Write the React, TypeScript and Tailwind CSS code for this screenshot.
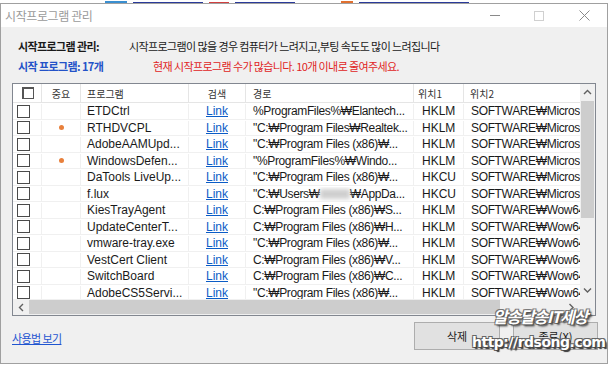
import React from "react";

type Row = {
  name: string;
  dot?: boolean;
  path: React.ReactNode;
  hive: string;
  key2: string;
};

const rows: Row[] = [
  { name: "ETDCtrl", path: "%ProgramFiles%₩Elantech...", hive: "HKLM", key2: "SOFTWARE₩Microsoft" },
  { name: "RTHDVCPL", dot: true, path: "\"C:₩Program Files₩Realtek...", hive: "HKLM", key2: "SOFTWARE₩Microsoft" },
  { name: "AdobeAAMUpd...", path: "\"C:₩Program Files (x86)₩...", hive: "HKLM", key2: "SOFTWARE₩Microsoft" },
  { name: "WindowsDefen...", dot: true, path: "\"%ProgramFiles%₩Windo...", hive: "HKLM", key2: "SOFTWARE₩Microsoft" },
  { name: "DaTools LiveUp...", path: "\"C:₩Program Files (x86)₩...", hive: "HKCU", key2: "SOFTWARE₩Microsoft" },
  {
    name: "f.lux",
    path: (
      <>
        "C:₩Users₩
        <span className="inline-block h-[10px] w-[30px] bg-[#cfcfcf] align-middle blur-[2px]" />
        ₩AppDa...
      </>
    ),
    hive: "HKCU",
    key2: "SOFTWARE₩Microsoft",
  },
  { name: "KiesTrayAgent", path: "C:₩Program Files (x86)₩S...", hive: "HKLM", key2: "SOFTWARE₩Wow6432Node" },
  { name: "UpdateCenterT...", path: "C:₩Program Files (x86)₩H...", hive: "HKLM", key2: "SOFTWARE₩Wow6432Node" },
  { name: "vmware-tray.exe", path: "\"C:₩Program Files (x86)₩...", hive: "HKLM", key2: "SOFTWARE₩Wow6432Node" },
  { name: "VestCert Client", path: "C:₩Program Files (x86)₩V...", hive: "HKLM", key2: "SOFTWARE₩Wow6432Node" },
  { name: "SwitchBoard", path: "C:₩Program Files (x86)₩C...", hive: "HKLM", key2: "SOFTWARE₩Wow6432Node" },
  { name: "AdobeCS5Servi...", path: "\"C:₩Program Files (x86)₩...", hive: "HKLM", key2: "SOFTWARE₩Wow6432Node" },
];

const ko = "font-['Noto_Sans_CJK_KR',sans-serif]";

function Chevron({ dir }: { dir: "up" | "down" | "left" | "right" }) {
  const d = {
    up: "M1 5 L4.5 1.5 L8 5",
    down: "M1 1.5 L4.5 5 L8 1.5",
    left: "M5 1 L1.5 4.5 L5 8",
    right: "M1.5 1 L5 4.5 L1.5 8",
  }[dir];
  const vert = dir === "up" || dir === "down";
  return (
    <svg width={vert ? 9 : 7} height={vert ? 7 : 9} viewBox={vert ? "0 0 9 7" : "0 0 7 9"}>
      <path d={d} fill="none" stroke="#606060" strokeWidth="1.4" />
    </svg>
  );
}

function Box() {
  return <div className="h-[13px] w-[13px] border border-[#4a4a4a] bg-white" />;
}

export default function App() {
  return (
    <div className="relative h-[366px] w-[610px] overflow-hidden bg-white font-['Liberation_Sans','Noto_Sans_CJK_KR',sans-serif]">
      {/* window behind */}
      <div className="flex h-[3px] items-end gap-[6px] pl-[105px]">
        <div className="h-[2px] w-[22px] bg-[#3a8fd0]" />
        <div className="h-[1px] w-[70px] bg-[#2a3a9a]" />
        <div className="h-[1px] w-[20px] bg-[#d04040]" />
        <div className="h-[1px] w-[60px] bg-[#2a3a9a]" />
        <div className="ml-[40px] h-[2px] w-[12px] bg-[#e07030]" />
        <div className="h-[1px] w-[110px] bg-[#2a3a9a]" />
      </div>

      <div className="flex h-[361px] w-[608px] flex-col border border-[#a0a0a0]">
        {/* Title bar */}
        <div className="flex h-[23px] items-center bg-white">
          <span className={`${ko} pl-[4px] text-[12px] tracking-[-0.4px] text-[#9a9a9a]`}>
            시작프로그램 관리
          </span>
          <div className="ml-auto flex items-center">
            <div className="flex w-[44px] justify-center">
              <div className="h-[1px] w-[10px] bg-[#8a8a8a]" />
            </div>
            <div className="flex w-[44px] justify-center">
              <div className="h-[10px] w-[10px] border border-[#d0d0d0]" />
            </div>
            <div className="flex w-[46px] justify-center">
              <svg width="11" height="11" viewBox="0 0 11 11">
                <path d="M0.5 0.5 L10.5 10.5 M10.5 0.5 L0.5 10.5" stroke="#8a8a8a" strokeWidth="1" />
              </svg>
            </div>
          </div>
        </div>

        {/* Body */}
        <div className="flex flex-1 flex-col bg-[#f0f0f0] px-[11px] pt-[11px]">
          <div className={`${ko} flex h-[16px] items-center pl-[6px] text-[11px] tracking-[-0.6px] text-[#1a1a1a]`}>
            <span className="w-[111px] font-bold">시작프로그램 관리:</span>
            <span>시작프로그램이 많을 경우 컴퓨터가 느려지고,부팅 속도도 많이 느려집니다</span>
          </div>
          <div className={`${ko} mt-[4px] flex h-[16px] items-center pl-[6px] text-[11px] tracking-[-0.6px]`}>
            <span className="w-[135px] font-bold text-[#2352c8]">시작 프로그램: 17개</span>
            <span className="text-[#e02424]">현재 시작프로그램 수가 많습니다. 10개 이내로 줄여주세요.</span>
          </div>

          {/* List view */}
          <div className="mt-[9px] flex h-[233px] flex-col border border-[#828790] bg-white">
            <div className="flex h-[215px]">
              <div className="min-w-0 flex-1 overflow-hidden">
                {/* Header */}
                <div className={`${ko} flex h-[19px] border-b border-[#e5e5e5] text-[10px] text-[#333]`}>
                  <div className="flex w-[29px] shrink-0 items-center border-r border-[#e5e5e5] pl-[9px]">
                    <div className="h-[12px] w-[12px] border-t-2 border-l-2 border-r border-b border-[#555] bg-white" />
                  </div>
                  <div className="flex w-[39px] shrink-0 items-center justify-center border-r border-[#e5e5e5]">중요</div>
                  <div className="flex w-[108px] shrink-0 items-center border-r border-[#e5e5e5] pl-[6px]">프로그램</div>
                  <div className="flex w-[57px] shrink-0 items-center justify-center border-r border-[#e5e5e5]">검색</div>
                  <div className="flex w-[168px] shrink-0 items-center border-r border-[#e5e5e5] pl-[7px]">경로</div>
                  <div className="flex w-[50px] shrink-0 items-center border-r border-[#e5e5e5] pl-[4px]">위치1</div>
                  <div className="flex flex-1 items-center pl-[6px]">위치2</div>
                </div>

                {/* Rows */}
                {rows.map((r, i) => (
                  <div key={i} className="flex h-[16.5px] border-b border-[#f0f0f0] pt-[1px] text-[12px] leading-none text-[#1a1a1a]">
                    <div className="flex w-[29px] shrink-0 items-center border-r border-[#f0f0f0] pl-[4px]">
                      <Box />
                    </div>
                    <div className="flex w-[39px] shrink-0 items-center justify-center border-r border-[#f0f0f0]">
                      {r.dot && <div className="h-[5px] w-[5px] rounded-full bg-[#e8803c]" />}
                    </div>
                    <div className="flex w-[108px] shrink-0 items-center overflow-hidden whitespace-nowrap border-r border-[#f0f0f0] pl-[6px]">
                      {r.name}
                    </div>
                    <div className="flex w-[57px] shrink-0 items-center justify-center border-r border-[#f0f0f0]">
                      <span className="text-[#0b5cc6] underline">Link</span>
                    </div>
                    <div className="flex w-[168px] shrink-0 items-center overflow-hidden whitespace-nowrap border-r border-[#f0f0f0] pl-[7px] tracking-[-0.35px]">
                      {r.path}
                    </div>
                    <div className="flex w-[50px] shrink-0 items-center border-r border-[#f0f0f0] pl-[8px]">{r.hive}</div>
                    <div className="flex flex-1 items-center overflow-hidden whitespace-nowrap pl-[7px] tracking-[-0.35px]">{r.key2}</div>
                  </div>
                ))}
              </div>

              {/* Vertical scrollbar */}
              <div className="flex w-[15px] shrink-0 flex-col bg-[#f0f0f0]">
                <div className="flex h-[17px] items-center justify-center">
                  <Chevron dir="up" />
                </div>
                <div className="mx-[1px] h-[117px] bg-[#cdcdcd]" />
                <div className="flex-1" />
                <div className="flex h-[17px] items-center justify-center">
                  <Chevron dir="down" />
                </div>
              </div>
            </div>

            {/* Horizontal scrollbar */}
            <div className="flex h-[16px] bg-[#f0f0f0]">
              <div className="flex w-[16px] items-center justify-center">
                <Chevron dir="left" />
              </div>
              <div className="my-[1px] w-[471px] bg-[#cdcdcd]" />
              <div className="flex-1" />
              <div className="flex w-[17px] items-center justify-center">
                <Chevron dir="right" />
              </div>
              <div className="w-[15px] bg-[#f0f0f0]" />
            </div>
          </div>

          {/* Footer */}
          <div className="mt-[6px] flex h-[28px] items-center">
            <span className={`${ko} pt-[4px] text-[11px] tracking-[-0.6px] text-[#1f55d0] underline`}>사용법 보기</span>
            <button className={`${ko} ml-auto h-[28px] w-[86px] border border-[#adadad] bg-[#e1e1e1] text-[11px] text-[#1a1a1a]`}>
              삭제
            </button>
            <button className={`${ko} ml-[13px] mr-[-2px] h-[28px] w-[85px] border border-[#adadad] bg-[#e1e1e1] text-[11px] text-[#1a1a1a]`}>
              종료(X)
            </button>
          </div>
        </div>
      </div>

      {/* Watermark */}
      <div className={`${ko} absolute left-[493px] top-[304px] text-[16px] font-bold italic tracking-[-1.2px] text-white [text-shadow:1px_1px_0_#555,-1px_-1px_0_#777,1px_-1px_0_#777,-1px_1px_0_#777,2px_2px_2px_#333]`}>
        알송달송IT세상
      </div>
      <div className="absolute left-[472px] top-[332px] font-['DejaVu_Sans',sans-serif] text-[14px] font-bold tracking-[-0.5px] text-white [text-shadow:1px_1px_0_#444,-1px_-1px_0_#666,1px_-1px_0_#666,-1px_1px_0_#666,2px_2px_1px_#333]">
        http://rdsong.com
      </div>
    </div>
  );
}
